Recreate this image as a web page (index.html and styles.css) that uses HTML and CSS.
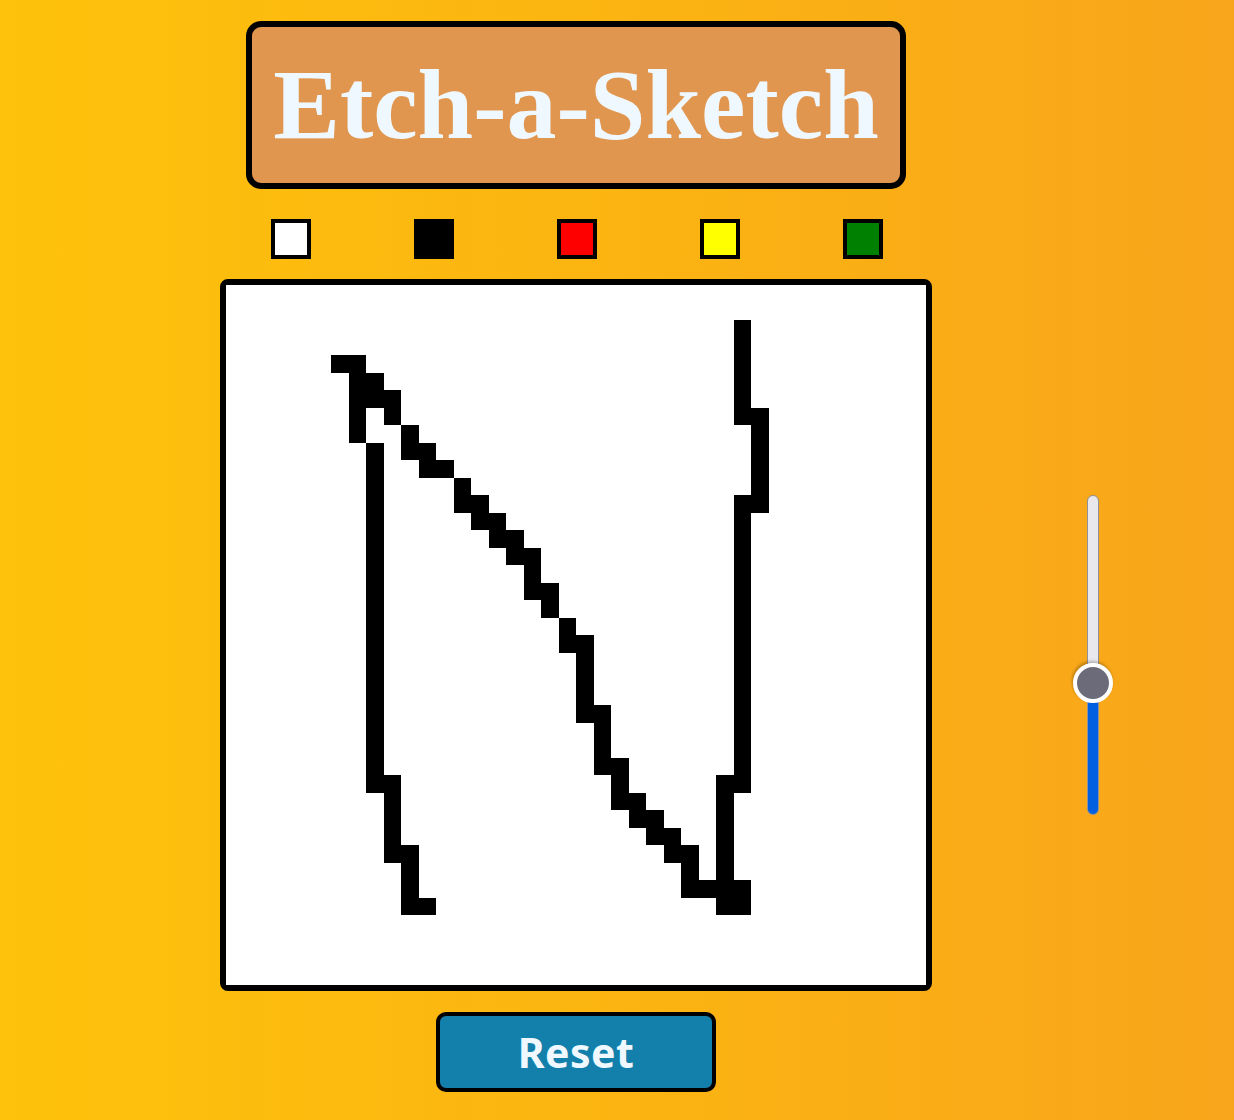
FILE: index.html
```html
<!DOCTYPE html>
<html lang="en">
<head>
<meta charset="utf-8">
<title>Etch-a-Sketch</title>
<link rel="stylesheet" href="styles.css">
</head>
<body>
<div class="page">
  <main class="column">
    <h1 class="title">Etch-a-Sketch</h1>
    <div class="palette">
      <button class="swatch swatch-white" aria-label="White"></button>
      <button class="swatch swatch-black" aria-label="Black"></button>
      <button class="swatch swatch-red" aria-label="Red"></button>
      <button class="swatch swatch-yellow" aria-label="Yellow"></button>
      <button class="swatch swatch-green" aria-label="Green"></button>
    </div>
    <div class="board" id="board"></div>
    <button class="reset">Reset</button>
  </main>
  <div class="slider-wrap">
    <input class="size-slider" type="range" min="0" max="100" value="40" aria-label="Grid size">
  </div>
</div>
<script src="script.js"></script>
</body>
</html>
```

FILE: styles.css
```css
* {
  box-sizing: border-box;
}

html, body {
  margin: 0;
  padding: 0;
}

body {
  min-height: 1120px;
  background: linear-gradient(90deg, #fec20b 0%, #fbb411 50%, #f8a51b 100%);
  font-family: "Liberation Sans", Arial, sans-serif;
}

.page {
  display: flex;
  align-items: flex-start;
  padding-left: 220px;
}

.column {
  width: 712px;
  display: flex;
  flex-direction: column;
  align-items: center;
  padding-top: 21px;
}

.title {
  margin: 0;
  padding: 20px 21px 21px;
  background: #e0964f;
  border: 6px solid #000;
  border-radius: 15px;
  color: #f0f8ff;
  font-family: "Liberation Serif", "Times New Roman", serif;
  font-weight: 700;
  font-size: 100px;
  line-height: 115px;
  white-space: nowrap;
}

.palette {
  display: flex;
  gap: 103px;
  margin-top: 30px;
  padding-left: 1px;
}

.swatch {
  width: 40px;
  height: 40px;
  padding: 0;
  margin: 0;
  border: 4px solid #000;
  border-radius: 0;
  cursor: pointer;
}

.swatch-white { background: #ffffff; }
.swatch-black { background: #000000; }
.swatch-red { background: #ff0000; }
.swatch-yellow { background: #ffff00; }
.swatch-green { background: #008000; }

.board {
  margin-top: 20px;
  width: 712px;
  height: 712px;
  border: 6px solid #000;
  border-radius: 8px;
  background: #fff;
  display: grid;
  grid-template-columns: repeat(40, 1fr);
  grid-template-rows: repeat(40, 1fr);
}

.cell {
  background: #fff;
}

.cell.on {
  background: #000;
}

.reset {
  margin-top: 21px;
  width: 280px;
  height: 80px;
  border: 4px solid #000;
  border-radius: 10px;
  background: #1380ab;
  color: #f0f8ff;
  font-family: "Noto Sans", "Open Sans", sans-serif;
  font-weight: 700;
  font-size: 41px;
  letter-spacing: 0.5px;
  line-height: 1;
  padding: 0;
  cursor: pointer;
}

.slider-wrap {
  width: 40px;
  height: 320px;
  margin-left: 141px;
  margin-top: 495px;
  display: flex;
  align-items: center;
  justify-content: center;
}

.size-slider {
  -webkit-appearance: none;
  appearance: none;
  flex-shrink: 0;
  width: 320px;
  height: 40px;
  margin: 0;
  padding: 0;
  background: transparent;
  transform: rotate(-90deg);
}

.size-slider::-webkit-slider-runnable-track {
  height: 12px;
  box-sizing: border-box;
  border: 1px solid #8f8f9d;
  border-radius: 6px;
  background: linear-gradient(90deg, #0060df 0%, #0060df 41.25%, #e9e9ed 41.25%, #e9e9ed 100%);
}

.size-slider::-webkit-slider-thumb {
  -webkit-appearance: none;
  appearance: none;
  width: 40px;
  height: 40px;
  margin-top: -15px;
  border-radius: 50%;
  background: #6b6b79;
  border: 4px solid #fff;
  box-shadow: 2px -1px 3px rgba(0, 0, 0, 0.25);
}
```

FILE: script.js
```js
(function () {
  var SIZE = 40;
  var drawn = {
    2: [29], 3: [29], 4: [6, 7, 29], 5: [7, 8, 29], 6: [7, 8, 9, 29],
    7: [7, 9, 29, 30], 8: [7, 10, 30], 9: [8, 10, 11, 30], 10: [8, 11, 12, 30],
    11: [8, 13, 30], 12: [8, 13, 14, 29, 30], 13: [8, 14, 15, 29],
    14: [8, 15, 16, 29], 15: [8, 16, 17, 29], 16: [8, 17, 29],
    17: [8, 17, 18, 29], 18: [8, 18, 29], 19: [8, 19, 29], 20: [8, 19, 20, 29],
    21: [8, 20, 29], 22: [8, 20, 29], 23: [8, 20, 29], 24: [8, 20, 21, 29],
    25: [8, 21, 29], 26: [8, 21, 29], 27: [8, 21, 22, 29],
    28: [8, 9, 22, 28, 29], 29: [9, 22, 23, 28], 30: [9, 23, 24, 28],
    31: [9, 24, 25, 28], 32: [9, 10, 25, 26, 28], 33: [10, 26, 28],
    34: [10, 26, 27, 28, 29], 35: [10, 11, 28, 29]
  };
  var board = document.getElementById('board');
  var frag = document.createDocumentFragment();
  for (var r = 0; r < SIZE; r++) {
    var cols = drawn[r] || [];
    for (var c = 0; c < SIZE; c++) {
      var cell = document.createElement('div');
      cell.className = cols.indexOf(c) !== -1 ? 'cell on' : 'cell';
      frag.appendChild(cell);
    }
  }
  board.appendChild(frag);

  var color = '#000';
  var swatches = document.querySelectorAll('.swatch');
  swatches.forEach(function (s) {
    s.addEventListener('click', function () {
      color = getComputedStyle(s).backgroundColor;
    });
  });
  board.addEventListener('mouseover', function (e) {
    if (e.target.classList.contains('cell')) {
      e.target.style.background = color;
    }
  });
  document.querySelector('.reset').addEventListener('click', function () {
    board.querySelectorAll('.cell').forEach(function (cell) {
      cell.classList.remove('on');
      cell.style.background = '';
    });
  });
})();
```
